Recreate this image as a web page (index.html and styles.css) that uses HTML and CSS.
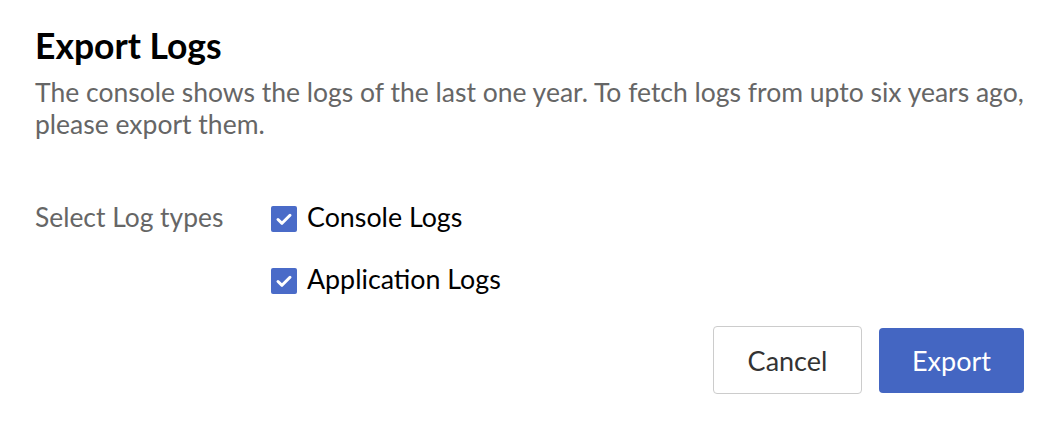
FILE: index.html
```html
<!DOCTYPE html>
<html>
<head>
<meta charset="utf-8">
<link rel="stylesheet" href="styles.css">
</head>
<body>
<div class="dialog">
  <h1 class="title">Export Logs</h1>
  <p class="desc">The console shows the logs of the last one year. To fetch logs from upto six years ago, please export them.</p>
  <div class="field">
    <div class="label">Select Log types</div>
    <div class="options">
      <label class="opt"><span class="box"><svg viewBox="0 0 26 26" width="26" height="26"><path d="M7 13.5 L11 17.3 L19 9.3" fill="none" stroke="#fff" stroke-width="3" stroke-linecap="round" stroke-linejoin="round"/></svg></span>Console Logs</label>
      <label class="opt"><span class="box"><svg viewBox="0 0 26 26" width="26" height="26"><path d="M7 13.5 L11 17.3 L19 9.3" fill="none" stroke="#fff" stroke-width="3" stroke-linecap="round" stroke-linejoin="round"/></svg></span>Application Logs</label>
    </div>
  </div>
  <div class="actions">
    <button class="btn cancel">Cancel</button>
    <button class="btn primary">Export</button>
  </div>
</div>
</body>
</html>
```

FILE: styles.css
```css
html, body { margin: 0; padding: 0; background: #fff; }
body { font-family: Lato, "Open Sans", sans-serif; }
.dialog { padding: 24px 27px 0 35px; }
.title { margin: 0; font-size: 35.5px; font-weight: 700; color: #000; line-height: 44px; }
.desc { margin: 8px 0 0; font-size: 26.5px; line-height: 32px; color: #666; }
.field { display: flex; margin-top: 61px; }
.label { width: 236px; flex: none; font-size: 26.4px; color: #666; line-height: 32px; }
.options { display: flex; flex-direction: column; gap: 30px; }
.opt { display: flex; align-items: flex-start; gap: 10px; font-size: 26.8px; color: #000; line-height: 32px; }
.box { width: 26px; height: 26px; margin-top: 5px; background: #4a6bc8; border-radius: 2px; display: inline-flex; flex: none; }
.actions { display: flex; justify-content: flex-end; align-items: flex-start; gap: 17px; margin-top: 31px; }
.btn { font-family: Lato, sans-serif; font-size: 27px; border-radius: 4px; cursor: pointer; padding: 0; }
.cancel { width: 149px; height: 68px; background: #fff; border: 1px solid #ccc; color: #333; }
.primary { width: 145px; height: 65px; margin-top: 2px; background: #4466c2; border: none; color: #fff; }
```
